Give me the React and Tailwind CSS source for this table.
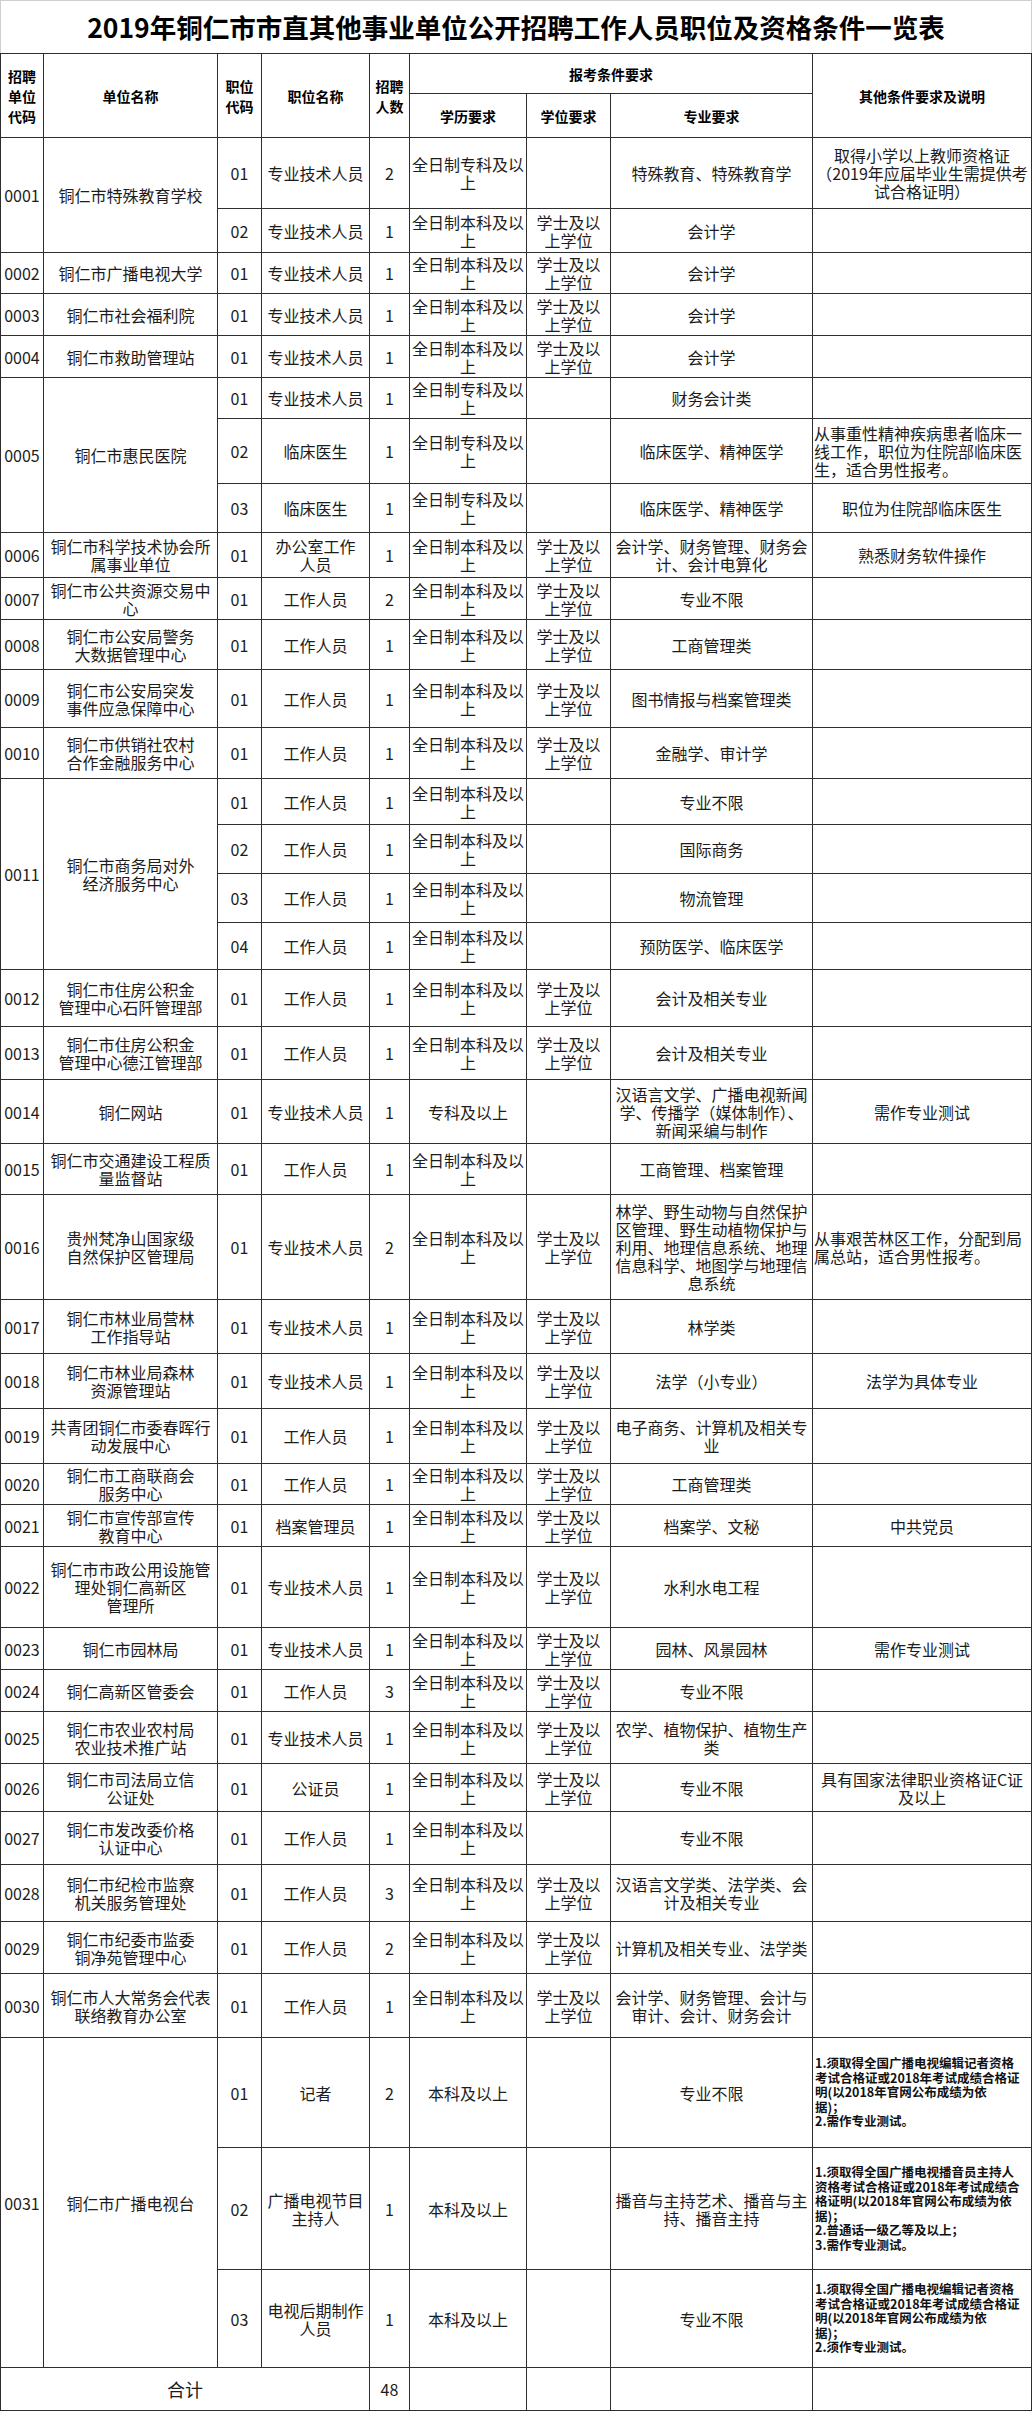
import React from 'react';

const EDU_B = '全日制本科及以\n上';
const EDU_Z = '全日制专科及以\n上';
const DEG = '学士及以\n上学位';
const TECH = '专业技术人员';
const STAFF = '工作人员';

const units = [
  { code: '0001', name: '铜仁市特殊教育学校', rows: [
    { pc: '01', t: TECH, n: '2', e: EDU_Z, d: '', m: '特殊教育、特殊教育学', o: '取得小学以上教师资格证\n（2019年应届毕业生需提供考\n试合格证明）', h: 'h-[71px]' },
    { pc: '02', t: TECH, n: '1', e: EDU_B, d: DEG, m: '会计学', h: 'h-[44px]' },
  ] },
  { code: '0002', name: '铜仁市广播电视大学', rows: [{ pc: '01', t: TECH, n: '1', e: EDU_B, d: DEG, m: '会计学', h: 'h-[41px]' }] },
  { code: '0003', name: '铜仁市社会福利院', rows: [{ pc: '01', t: TECH, n: '1', e: EDU_B, d: DEG, m: '会计学', h: 'h-[42px]' }] },
  { code: '0004', name: '铜仁市救助管理站', rows: [{ pc: '01', t: TECH, n: '1', e: EDU_B, d: DEG, m: '会计学', h: 'h-[42px]' }] },
  { code: '0005', name: '铜仁市惠民医院', rows: [
    { pc: '01', t: TECH, n: '1', e: EDU_Z, d: '', m: '财务会计类', h: 'h-[41px]' },
    { pc: '02', t: '临床医生', n: '1', e: EDU_Z, d: '', m: '临床医学、精神医学', o: '从事重性精神疾病患者临床一\n线工作，职位为住院部临床医\n生，适合男性报考。', left: true, h: 'h-[65px]' },
    { pc: '03', t: '临床医生', n: '1', e: EDU_Z, d: '', m: '临床医学、精神医学', o: '职位为住院部临床医生', h: 'h-[49px]' },
  ] },
  { code: '0006', name: '铜仁市科学技术协会所\n属事业单位', rows: [{ pc: '01', t: '办公室工作\n人员', n: '1', e: EDU_B, d: DEG, m: '会计学、财务管理、财务会\n计、会计电算化', o: '熟悉财务软件操作', h: 'h-[45px]' }] },
  { code: '0007', name: '铜仁市公共资源交易中\n心', rows: [{ pc: '01', t: STAFF, n: '2', e: EDU_B, d: DEG, m: '专业不限', h: 'h-[42px]' }] },
  { code: '0008', name: '铜仁市公安局警务\n大数据管理中心', rows: [{ pc: '01', t: STAFF, n: '1', e: EDU_B, d: DEG, m: '工商管理类', h: 'h-[50px]' }] },
  { code: '0009', name: '铜仁市公安局突发\n事件应急保障中心', rows: [{ pc: '01', t: STAFF, n: '1', e: EDU_B, d: DEG, m: '图书情报与档案管理类', h: 'h-[58px]' }] },
  { code: '0010', name: '铜仁市供销社农村\n合作金融服务中心', rows: [{ pc: '01', t: STAFF, n: '1', e: EDU_B, d: DEG, m: '金融学、审计学', h: 'h-[51px]' }] },
  { code: '0011', name: '铜仁市商务局对外\n经济服务中心', rows: [
    { pc: '01', t: STAFF, n: '1', e: EDU_B, d: '', m: '专业不限', h: 'h-[46px]' },
    { pc: '02', t: STAFF, n: '1', e: EDU_B, d: '', m: '国际商务', h: 'h-[49px]' },
    { pc: '03', t: STAFF, n: '1', e: EDU_B, d: '', m: '物流管理', h: 'h-[49px]' },
    { pc: '04', t: STAFF, n: '1', e: EDU_B, d: '', m: '预防医学、临床医学', h: 'h-[47px]' },
  ] },
  { code: '0012', name: '铜仁市住房公积金\n管理中心石阡管理部', rows: [{ pc: '01', t: STAFF, n: '1', e: EDU_B, d: DEG, m: '会计及相关专业', h: 'h-[57px]' }] },
  { code: '0013', name: '铜仁市住房公积金\n管理中心德江管理部', rows: [{ pc: '01', t: STAFF, n: '1', e: EDU_B, d: DEG, m: '会计及相关专业', h: 'h-[53px]' }] },
  { code: '0014', name: '铜仁网站', rows: [{ pc: '01', t: TECH, n: '1', e: '专科及以上', d: '', m: '汉语言文学、广播电视新闻\n学、传播学（媒体制作）、\n新闻采编与制作', o: '需作专业测试', h: 'h-[64px]' }] },
  { code: '0015', name: '铜仁市交通建设工程质\n量监督站', rows: [{ pc: '01', t: STAFF, n: '1', e: EDU_B, d: '', m: '工商管理、档案管理', h: 'h-[51px]' }] },
  { code: '0016', name: '贵州梵净山国家级\n自然保护区管理局', rows: [{ pc: '01', t: TECH, n: '2', e: EDU_B, d: DEG, m: '林学、野生动物与自然保护\n区管理、野生动植物保护与\n利用、地理信息系统、地理\n信息科学、地图学与地理信\n息系统', o: '从事艰苦林区工作，分配到局\n属总站，适合男性报考。', left: true, h: 'h-[105px]' }] },
  { code: '0017', name: '铜仁市林业局营林\n工作指导站', rows: [{ pc: '01', t: TECH, n: '1', e: EDU_B, d: DEG, m: '林学类', h: 'h-[54px]' }] },
  { code: '0018', name: '铜仁市林业局森林\n资源管理站', rows: [{ pc: '01', t: TECH, n: '1', e: EDU_B, d: DEG, m: '法学（小专业）', o: '法学为具体专业', h: 'h-[55px]' }] },
  { code: '0019', name: '共青团铜仁市委春晖行\n动发展中心', rows: [{ pc: '01', t: STAFF, n: '1', e: EDU_B, d: DEG, m: '电子商务、计算机及相关专\n业', h: 'h-[55px]' }] },
  { code: '0020', name: '铜仁市工商联商会\n服务中心', rows: [{ pc: '01', t: STAFF, n: '1', e: EDU_B, d: DEG, m: '工商管理类', h: 'h-[41px]' }] },
  { code: '0021', name: '铜仁市宣传部宣传\n教育中心', rows: [{ pc: '01', t: '档案管理员', n: '1', e: EDU_B, d: DEG, m: '档案学、文秘', o: '中共党员', h: 'h-[42px]' }] },
  { code: '0022', name: '铜仁市市政公用设施管\n理处铜仁高新区\n管理所', rows: [{ pc: '01', t: TECH, n: '1', e: EDU_B, d: DEG, m: '水利水电工程', h: 'h-[81px]' }] },
  { code: '0023', name: '铜仁市园林局', rows: [{ pc: '01', t: TECH, n: '1', e: EDU_B, d: DEG, m: '园林、风景园林', o: '需作专业测试', h: 'h-[42px]' }] },
  { code: '0024', name: '铜仁高新区管委会', rows: [{ pc: '01', t: STAFF, n: '3', e: EDU_B, d: DEG, m: '专业不限', h: 'h-[42px]' }] },
  { code: '0025', name: '铜仁市农业农村局\n农业技术推广站', rows: [{ pc: '01', t: TECH, n: '1', e: EDU_B, d: DEG, m: '农学、植物保护、植物生产\n类', h: 'h-[52px]' }] },
  { code: '0026', name: '铜仁市司法局立信\n公证处', rows: [{ pc: '01', t: '公证员', n: '1', e: EDU_B, d: DEG, m: '专业不限', o: '具有国家法律职业资格证C证\n及以上', h: 'h-[48px]' }] },
  { code: '0027', name: '铜仁市发改委价格\n认证中心', rows: [{ pc: '01', t: STAFF, n: '1', e: EDU_B, d: '', m: '专业不限', h: 'h-[53px]' }] },
  { code: '0028', name: '铜仁市纪检市监察\n机关服务管理处', rows: [{ pc: '01', t: STAFF, n: '3', e: EDU_B, d: DEG, m: '汉语言文学类、法学类、会\n计及相关专业', h: 'h-[57px]' }] },
  { code: '0029', name: '铜仁市纪委市监委\n铜净苑管理中心', rows: [{ pc: '01', t: STAFF, n: '2', e: EDU_B, d: DEG, m: '计算机及相关专业、法学类', h: 'h-[52px]' }] },
  { code: '0030', name: '铜仁市人大常务会代表\n联络教育办公室', rows: [{ pc: '01', t: STAFF, n: '1', e: EDU_B, d: DEG, m: '会计学、财务管理、会计与\n审计、会计、财务会计', h: 'h-[64px]' }] },
  { code: '0031', name: '铜仁市广播电视台', rows: [
    { pc: '01', t: '记者', n: '2', e: '本科及以上', d: '', m: '专业不限', small: '1.须取得全国广播电视编辑记者资格\n考试合格证或2018年考试成绩合格证\n明(以2018年官网公布成绩为依\n据)；\n2.需作专业测试。', h: 'h-[110px]' },
    { pc: '02', t: '广播电视节目\n主持人', n: '1', e: '本科及以上', d: '', m: '播音与主持艺术、播音与主\n持、播音主持', small: '1.须取得全国广播电视播音员主持人\n资格考试合格证或2018年考试成绩合\n格证明(以2018年官网公布成绩为依\n据)；\n2.普通话一级乙等及以上；\n3.需作专业测试。', h: 'h-[122px]' },
    { pc: '03', t: '电视后期制作\n人员', n: '1', e: '本科及以上', d: '', m: '专业不限', small: '1.须取得全国广播电视编辑记者资格\n考试合格证或2018年考试成绩合格证\n明(以2018年官网公布成绩为依\n据)；\n2.须作专业测试。', h: 'h-[98px]' },
  ] },
];

const cell = 'border border-[#2e2e2e] p-0 px-[1px] text-center align-middle whitespace-pre-line';
const head = 'border border-[#2e2e2e] p-0 text-center align-middle whitespace-pre-line font-bold text-[14px] leading-[20px] text-black';

export default function App() {
  return (
    <div className="w-[1032px] bg-white font-['Noto_Sans_CJK_SC','Liberation_Sans',sans-serif] text-[#1c1c1c]">
      <div className="h-[53px] flex items-center justify-center border-t border-x border-[#cfcfcf]">
        <h1 className="text-[26.5px] font-bold text-black leading-none">
          2019年铜仁市市直其他事业单位公开招聘工作人员职位及资格条件一览表
        </h1>
      </div>
      <table className="w-[1031px] table-fixed border-collapse text-[16px] leading-[18px]">
        <colgroup>
          <col className="w-[43px]" />
          <col className="w-[174px]" />
          <col className="w-[44px]" />
          <col className="w-[108px]" />
          <col className="w-[40px]" />
          <col className="w-[117px]" />
          <col className="w-[84px]" />
          <col className="w-[202px]" />
          <col className="w-[219px]" />
        </colgroup>
        <thead>
          <tr className="h-[40px]">
            <th rowSpan={2} className={head}>{'招聘\n单位\n代码'}</th>
            <th rowSpan={2} className={head}>单位名称</th>
            <th rowSpan={2} className={head}>{'职位\n代码'}</th>
            <th rowSpan={2} className={head}>职位名称</th>
            <th rowSpan={2} className={head}>{'招聘\n人数'}</th>
            <th colSpan={3} className={head}>报考条件要求</th>
            <th rowSpan={2} className={head}>其他条件要求及说明</th>
          </tr>
          <tr className="h-[44px]">
            <th className={head}>学历要求</th>
            <th className={head}>学位要求</th>
            <th className={head}>专业要求</th>
          </tr>
        </thead>
        <tbody>
          {units.map((u) =>
            u.rows.map((r, i) => (
              <tr key={u.code + r.pc} className={r.h}>
                {i === 0 && (
                  <>
                    <td rowSpan={u.rows.length} className={cell}>{u.code}</td>
                    <td rowSpan={u.rows.length} className={cell}>{u.name}</td>
                  </>
                )}
                <td className={cell}>{r.pc}</td>
                <td className={cell}>{r.t}</td>
                <td className={cell}>{r.n}</td>
                <td className={cell}>{r.e}</td>
                <td className={cell}>{r.d}</td>
                <td className={cell}>{r.m}</td>
                {r.small ? (
                  <td className={`${cell} !text-left !px-[2px] text-[12.5px] leading-[14.5px] font-bold whitespace-pre text-[#111]`}>{r.small}</td>
                ) : (
                  <td className={`${cell} ${r.left ? '!text-left' : ''}`}>{r.o || ''}</td>
                )}
              </tr>
            ))
          )}
          <tr className="h-[43px]">
            <td colSpan={4} className={`${cell} text-[18px]`}>合计</td>
            <td className={cell}>48</td>
            <td className={cell}></td>
            <td className={cell}></td>
            <td className={cell}></td>
            <td className={cell}></td>
          </tr>
        </tbody>
      </table>
    </div>
  );
}
